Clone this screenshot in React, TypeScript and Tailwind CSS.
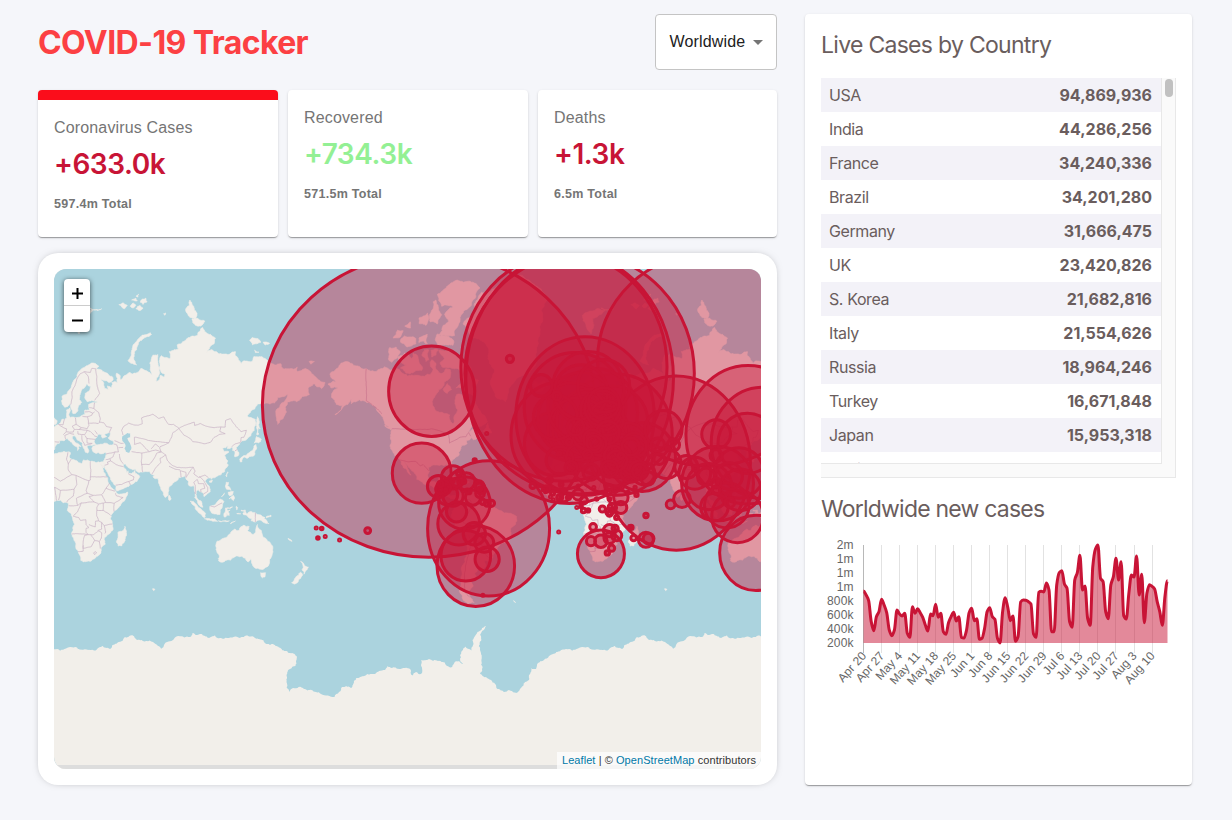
import React from "react";

/* ---------- geography (Web Mercator, zoom 1: one world is 512px wide) ---------- */

const WORLD = 512;
const MAP_W = 707;
const MAP_H = 500;
const EQUATOR_Y = 240;
const MAX_LAT = 85.0511;
const RAD = Math.PI / 180;
const SCALE = WORLD / (2 * Math.PI);

const lngToX = (lng: number) => (lng * WORLD) / 360;
const latToY = (lat: number) => {
  const l = Math.max(-MAX_LAT, Math.min(MAX_LAT, lat));
  return EQUATOR_Y - SCALE * Math.log(Math.tan(Math.PI / 4 + (l * RAD) / 2));
};
const yToLat = (y: number) => (2 * Math.atan(Math.exp((EQUATOR_Y - y) / SCALE)) - Math.PI / 2) / RAD;

type Pt = [number, number];

/* Repeatable noise in [-1, 1] that depends only on the position. */
const noise = (x: number, y: number) => {
  const s = Math.sin(x * 127.1 + y * 311.7) * 43758.5453;
  return (s - Math.floor(s)) * 2 - 1;
};

/* Breaks long coast segments into small uneven ones. */
const roughen = (a: Pt, b: Pt, amount: number): Pt[] => {
  const dx = b[0] - a[0];
  const dy = b[1] - a[1];
  const len = Math.hypot(dx, dy);
  if (len < 1.8) return [b];
  const k = noise(a[0] + b[0], a[1] + b[1]) * amount;
  const m: Pt = [(a[0] + b[0]) / 2 - dy * k, (a[1] + b[1]) / 2 + dx * k];
  return [...roughen(a, m, amount), ...roughen(m, b, amount)];
};

const toPath = (s: string, close: boolean, amount: number) => {
  const p: Pt[] = s
    .trim()
    .split(/\s+/)
    .map((pair) => {
      const [lng, lat] = pair.split(",").map(Number);
      return [lngToX(lng), latToY(lat)];
    });
  const out: Pt[] = [p[0]];
  for (let i = 1; i < p.length; i++) out.push(...roughen(p[i - 1], p[i], amount));
  if (close) out.push(...roughen(p[p.length - 1], p[0], amount));
  return out.map(([x, y], i) => `${i ? "L" : "M"}${x.toFixed(1)} ${y.toFixed(1)}`).join("") + (close ? "Z" : "");
};

const LAND: string[] = [
  // Eurasia
  "25.7,71.1 28,71 31,70.3 29,69.8 33,69.4 37,68.6 40,67.8 41,66.8 38,66.1 34,66.7 32.5,67.1 34.5,65.8 34.8,64.4 37.5,64 37,65.1 40,64.6 40.5,65.5 40,66.1 42,66.4 44,66.1 44,67.2 43.3,68.6 46,68 46.5,66.8 48,67.6 50,68.1 53,68.8 54.5,68.4 57,68.6 59,68.9 60.5,69.8 63,69.4 65,69.2 68.5,68.2 67,69.5 66.8,71 68,72 69,72.8 72.5,72.9 72.6,71 73.5,69.5 73.3,68.2 71.5,66.4 73.8,67 74,68 77,67.6 77.5,68.3 74.5,69 74,70.5 73.5,71.5 75,72.7 78,72.3 81,72 80.5,73.5 84,73.9 87,74 86,74.8 90,75.4 95,76.1 100,76.4 104,77.7 108,76.7 113,76 112,75 107,73.4 110,73.9 113.5,73.5 118,73 123,73 127,73.5 129,71.8 131,70.9 133,71.6 139,71.5 140,72.5 146,72.4 150,71.5 153,70.9 159,70.9 160.5,69.7 164,69.7 168,69.6 170.5,70.1 170.5,69 176,69.8 180,68.9 185,67 190,66.1 187.5,64.3 184,64.9 182,65.7 180,65 178,64.5 179,62.5 174,61.8 170,60 166,60.2 163.5,59.8 162,58 163,56.2 161.8,55 160,53.2 158.3,52.8 156.7,51 155.6,54.5 155.7,57 158,58 162,60.5 164,62.4 160,61.7 156.7,61.5 154.5,59.5 151,59.2 149,59.5 145,59.3 142.5,59.2 137.5,56 135.2,54.7 138,53.9 141,53.2 140.5,50 140.3,48.3 137,45.3 132,43.2 130,42 127.5,39.6 129.4,37 129.2,35.3 126.5,34.5 126.7,37.5 125,38 125,39.6 121.3,39 122,40.6 118,39.2 119,37.3 122.5,37.2 119.3,35 121.8,32 121,30.5 122,29.5 119.5,25.5 117,23.5 114,22.4 110.5,21.2 110,20.4 109.6,21.5 106.7,20.5 105.7,18.9 108.8,15.5 109.3,12 107,10.4 105,8.6 104.8,10.3 102.5,12 100.9,13.4 100,13 99.3,10 100.5,7.2 103,5.5 103.5,2.8 104.2,1.3 101.3,2.8 100.3,5.8 98.3,8 98.7,11.5 97.6,16.2 95.3,15.8 94.3,16.2 94,19 92,21.5 91.5,22.7 88.5,21.7 87,21.4 86.5,20 82.3,16.6 80.2,15.5 80.2,13 79.8,10.3 77.5,8.1 76.3,10 74.5,14 73,18 72.7,21 70.8,20.8 69,22.3 70.3,22.9 67.3,24.2 66.5,25.4 61.5,25.1 57.3,25.8 56.8,27 54.5,26.6 51.5,28 50,30.1 48,30 48.5,28.2 50.2,26.5 50.8,24.9 51.5,26 51.6,24.3 54,24.2 56.3,26.2 56.6,24.4 59.8,22.4 57.8,19 55.2,17.5 52,15.7 48,14 45,12.8 43.4,12.7 42.7,16.4 39.1,21.5 37,25 35,28 34.9,29.4 34.3,27.8 32.6,30 32.3,31.2 34.2,31.3 35,33 36,35.5 36,36.8 34,36.2 32.5,36.1 30.6,36.8 29,36.3 27.3,37 26.3,38.5 26.2,39.5 27,40.4 29,41.1 31.3,41.2 35,42 38.5,41 41.5,41.5 41,43 37.5,44.7 39,47.2 35,46.2 36.5,45.3 35,44.9 33.6,44.5 32.7,45.4 33,46.2 31,46.6 29.7,45.2 28,43.5 27.7,42.5 28.5,41.4 29,41.1 26.3,40.7 24,40.8 22.8,40.5 23.2,39.2 24,38 23,36.5 21.7,36.9 21,38.4 19.4,40.5 19.5,42 16,43.5 14.5,45.2 13.7,45.7 12.4,45.3 12.4,44.2 14,42.6 16.1,41.8 18.4,40 17,40.4 17,39 16,38 15.7,40 12.5,41.5 10.5,43 8.8,44.4 6.5,43.1 3.3,43.3 3.2,41.9 0,39.6 -.5,38.3 -2,36.8 -5.5,36.1 -6.5,37 -8.9,37 -9.4,38.8 -8.8,43.2 -1.6,43.4 -1.2,46 -4.6,48.2 -1.6,48.7 -1.7,49.7 1.5,50.8 4,51.7 5,53.2 8.5,53.7 8.2,57 10.6,57.7 10.5,56 9.8,55 11,54 14,54 18.6,54.7 21,55.2 21.2,57 23,57 24.3,57.2 23.7,59 28,59.6 30,59.9 26,60.4 22.8,60 21.3,61 21.3,62.8 25.4,65 22,65.7 21,64.6 17.5,62 17.2,60.7 19,59.8 16.5,58.5 16.3,56.8 14.3,55.5 12.8,55.5 11.2,59 10.5,59.2 7,58 5.2,59 5,61.8 10,63.8 12,65.5 14,67 16,68.5 19,69.8 22,70.4",
  // Africa
  "-6,35.8 -2,35.1 3,36.9 10,37.3 11,36.8 10.2,34.3 15.2,32.3 19,30.3 20,32.6 23,32.6 25,31.6 29,30.9 32.3,31.3 34.3,31.3 34.9,29.4 34.3,27.8 32.6,29.9 35.5,24 37.3,21 37.4,18.8 39.7,15 43.2,12 43.3,11.4 44.5,10.4 51.2,11.9 50,8 47,4 42,-1 39.5,-4.5 39,-7 40.7,-11 40.6,-15 36.8,-18 34.8,-20 35.5,-24 32.8,-26 32.5,-28.5 30,-31.5 26,-34 20,-34.8 18.3,-34 18.2,-32 15,-27 14.4,-22.5 11.8,-17.5 13.8,-11 12.3,-6 8.8,-1 9.8,3.5 8.5,4.6 6,4.3 4.3,6.3 1,5.9 -2,4.8 -7.5,4.4 -13,8.5 -16.8,12.5 -17.4,14.7 -16.2,19 -17,21 -14.5,26 -10,29.5 -9.5,32.5",
  "49.3,-12 50.4,-15.5 47.2,-25 44.5,-25.2 43.3,-22 44.5,-19.5 44.3,-16.3 47,-15.5",
  // Australia and New Zealand
  "142.5,-10.8 143.5,-14 145.3,-15 146.2,-18.8 149.5,-22 153.2,-25.5 153.4,-29 151,-33.5 150,-37.3 146.5,-39 143.5,-38.7 140,-37.8 138.3,-35.5 137.7,-33 136,-34.8 134,-32.7 131,-31.5 126,-32.3 123.5,-33.9 120,-34 118,-35 115.1,-34.2 115.7,-31.5 113.5,-26 114,-22.2 119,-20 122,-18 123.5,-17 126.5,-14 129.5,-15 130.8,-12.4 132.5,-11.4 136.7,-12.2 135.5,-15 139.5,-17.6 141,-16.5 141.6,-13",
  "144.7,-40.8 148.2,-40.9 147.8,-43 146,-43.5",
  "172.8,-34.5 175.5,-36.8 178.4,-37.7 177,-39.5 175.2,-41.6 175,-40 173.8,-39.3 174.7,-38 174.3,-36.3",
  "172.7,-40.6 174.2,-41.7 172.8,-43.8 170.7,-45.9 168.5,-46.6 166.5,-45.9 168.5,-44 171.2,-42.3",
  // South-east Asia
  "131,-.8 134,-.8 135,-3.3 138,-1.7 141,-2.6 145,-4.3 147.8,-6.2 147,-6.8 150.5,-10.3 147,-9.5 144,-7.8 141,-9.1 138,-8.3 138.5,-6.8 135,-4.4 132.8,-4 132.3,-2.8 134,-2.2 131.3,-1.5",
  "148.5,-5.7 152,-4.3 152,-5.4 149,-6.3",
  "109,1.8 111.3,2.5 113,3.3 116.7,7 119,5 117.7,1 116.2,-3.8 114.5,-4 110.2,-2.8 109,0",
  "95.3,5.6 97.5,5.2 100.5,2 103.5,-.8 106,-3 105.7,-5.8 104.3,-5.7 101,-2.5 98.7,1.6",
  "105.2,-6.8 108.5,-6.7 112.7,-6.9 114.5,-8.6 110,-8.1 106.5,-7.4",
  "115,-8.3 119,-8.4 122.8,-8.3 121,-8.9 117,-9",
  "123.5,-10.3 127,-8.4 125,-9.2",
  "119,-5.5 119,-3 120,.8 125,1.5 120.8,.4 121,-1 123.3,-.8 121.8,-1.9 122.8,-4.4 121.5,-4.5 121,-2.8 120.3,-5.5",
  "127.6,2 128.6,1 127.9,-.8 127.5,.8",
  "128,-3 130.8,-3.4 128.3,-3.5",
  "120.5,18.5 122.2,18.4 121.6,16 124,13 123,13.5 120.7,13.8 119.9,16",
  "122.5,7 124,8.5 125.6,9.6 126.4,7.5 125.5,5.8 123.5,7.7",
  "122,11.8 125.5,12.3 125,10.2 123,9.2 122,10.6",
  "117.3,8.5 119.4,11.2 119,10",
  "120.2,23 121.5,25.2 121.9,25 120.9,22",
  "108.7,19.3 110.8,20 110.4,18.5 109,18.3",
  "79.8,8.5 80.3,9.8 81.8,7.3 80.6,5.9 79.9,6.8",
  // Japan and Sakhalin
  "130,33 131,34 135,35.5 137,37 139,38 140,40.5 141.5,41.3 142,39.5 140.8,36 140,35 137,34.6 135.5,33.6 133,34.3 131.5,31.4 130.3,31.5",
  "140,42 141.8,45.4 145.3,43.8 143.3,42 141,42.3",
  "142.5,54.3 143.2,51 144.5,49 142.8,49.5 143.5,46.5 142,46.1 141.8,51.5",
  // Arctic Eurasia
  "51.5,71.6 53.5,71 57.5,70.6 55.5,72.3 56,73.4 58,74.5 61,75.6 68,76.6 67,76.9 60,76.2 56,75 54,73.6",
  "11,79.4 15,79.8 21,80.2 27,80 22,79.3 18,79 19,78 17,76.7 13.5,78",
  "24,80.3 33,80.2 30,80",
  "94,79.3 92,80 95,81.2 97,80.6 100,79.7 99,79",
  "96.5,78.9 100,79 105.5,78.6 102.5,77.9 99,78",
  "137,75.6 139,76.1 143,75.9 145,75.3 142,75 139,74.8",
  "146.5,75.3 151,75.1 148,74.8",
  "140.5,73.8 143.5,73.4 141,73.3",
  "178.8,71.4 182.5,71.4 180,70.8",
  "45,80.7 48,80.9 51,80.6 49,80.2 47,80.4",
  "53,80.5 55,80.9 57,80.6 55,80.3",
  "54,81.2 57,81.4 58,81.1",
  "57,80.2 60,80.6 62,80.3 59,80",
  "60,81 64,81.4 65,81 62,80.7",
  "57,81.6 59,81.8 58.5,81.5",
  "76.5,79.6 78,79.7 77.5,79.4",
  // Atlantic Europe
  "-5.5,50.2 -3,51.4 -5,52 -4.5,53.3 -3,54 -5,55 -6,57.5 -5,58.6 -3,58.5 -2,57.5 -3,56 0,53.5 1.7,52.6 1,51.2 -2,50.6",
  "-10,52 -9.8,54 -7.3,55.3 -5.7,54.5 -6.3,52.2",
  "-24,65.5 -22.5,66.4 -20,65.7 -16,66.5 -13.7,65 -18.5,63.4 -22.6,63.9 -22,64.6",
  // North America
  "-168,65.6 -164,66.5 -162,66.2 -166.5,68.3 -163,69.3 -160,70.5 -156.5,71.3 -150,70.5 -145,70 -141,69.7 -135,69 -128,70.2 -125,69.5 -121,69.8 -115,68.5 -112,67.8 -108,68 -104,68 -100,67.8 -98,68.4 -96,68.2 -94,69.5 -96,70.5 -95,71.8 -92,71 -92,69.5 -90,68.8 -88,68.5 -85,69.8 -82,69.5 -82,67.5 -86,66.3 -87,65 -90,64 -94,61 -94.5,58.8 -92.5,57 -86,55.6 -82.3,55 -82,52.8 -80,51.3 -79,52.5 -79,54.7 -76.6,57 -78.4,59 -77.5,62.4 -73.5,62.3 -70,61 -69.5,59 -66,58.8 -64.5,60.3 -61.5,57 -57.5,54.5 -55.8,52 -60,50.2 -66.5,50.2 -70,47.5 -65,49 -64.5,46.5 -61,45.5 -65.5,43.6 -67,44.8 -70.5,43.2 -70,41.7 -74,40.6 -76,37 -75.7,35.3 -78.5,33.8 -81.3,31.5 -80.2,26 -81.2,25.2 -82.7,28 -84.3,30 -89.5,29.3 -94,29.6 -97.3,27.7 -97.7,22.5 -95.8,18.8 -91,18.6 -90.3,21 -87,21.5 -88.2,17 -88,15.8 -83.3,15 -83.7,11 -81.5,9 -79.5,9.5 -77.3,8.6 -78.5,7.5 -80.3,7.4 -83,8.2 -85.7,10 -87.6,13 -92.3,14.5 -95,16 -101,17.5 -105.5,20.3 -105.5,22.5 -109,25.8 -112.5,29.8 -114.7,31.7 -112,27.5 -109.5,23.2 -110.3,23.5 -112.2,26 -115,28 -117.2,32.7 -120.6,34.6 -122.5,37.6 -124.3,40.4 -124,46 -123,48.8 -127.8,51 -130.5,54.8 -134,58 -139.5,59.7 -146,60.7 -151.5,59.3 -151,61.2 -154,59 -158,57.5 -163,55 -160,56.3 -157.5,58.7 -162,59 -165.5,61.5 -164.5,63.2 -161,64.5 -166,64.6",
  "-128,50.7 -125,49.8 -123.5,48.4 -126,49.3",
  "-59,47.7 -55.5,51.5 -53,47 -56,47",
  // Arctic Canada
  "-117,69.9 -113,68.6 -108,68.8 -102,69.3 -101.5,70.2 -105,72.7 -108,73.2 -109,72 -111,72.8 -114,73.2 -118.5,72.5 -117,71.3 -113,70.6",
  "-125.5,72 -123,71.2 -120,72 -117,73.4 -120,74.4 -124.5,74.3",
  "-90,73.8 -85,73.7 -81,73.7 -78,72.8 -74,71.8 -70,70.8 -67,69.5 -66.5,68 -62,66.7 -64,65.2 -67,66.2 -65,63.5 -66,62 -70,62.7 -74,64.5 -78,64.5 -73.5,66 -73,68.3 -77,69.8 -82,70 -88,70.3 -89,71.2 -86,72",
  "-87,64 -84,65.8 -81,64 -84,62.8",
  "-102,72.8 -100,73.9 -97,73.8 -97,71.8 -99,71.4",
  "-95.5,73.8 -90.5,73.9 -92,72.8 -95,72.4",
  "-91,76.7 -89,76.4 -80,75.7 -80,74.7 -90,74.6 -92.5,75.7",
  "-104,75.2 -104,76 -98,76.6 -98,75 -101,75.5",
  "-117,75.3 -114,76.4 -109,76.2 -106,75.9 -106,75 -113,74.5",
  "-122,76 -119,77.3 -115,77.2 -117,76.2",
  "-114,77.9 -110,78.5 -110,77.6",
  "-96,78.5 -94,81 -92,81.2 -88,79.5 -91,78.2",
  "-104,79 -104,78.3 -99,78 -98,79.7",
  "-90,76.5 -84,76.4 -79,76.4 -78,77.5 -75,78.7 -72,80 -65,81.3 -61,82.4 -68,83 -77,83.1 -85,82.4 -91,81.8 -88,80.5 -80,80.4 -86,79.5 -83,78.6 -87,78",
  // Greenland
  "-73,78.2 -66,79.3 -65,80.8 -60,82 -50,82.4 -40,83.2 -32,83.5 -22,82.6 -13,81.5 -18,80 -19,77 -20,75 -22,73 -22,70.5 -26,68.7 -33,67.7 -38,65.7 -41,63.5 -43,60 -48,61 -51.5,63.5 -53.5,66.7 -51,69.5 -54.5,71 -55,73 -58,75.3 -66,76",
  // Caribbean
  "-84.8,21.9 -82,23.1 -77,21.6 -74.3,20.2 -77.5,19.9 -79,21.5",
  "-74.3,18.5 -72,19.9 -68.5,18.7 -71.5,17.7",
  // South America
  "-77.3,8.6 -75,10.8 -71.7,12.3 -71.5,10.8 -68,10.9 -62,10.6 -57,6 -51.5,4.3 -50,.5 -48,-.8 -44,-2.8 -39.5,-3 -35.3,-5.3 -35,-8.5 -38.8,-13 -39.2,-17.8 -41,-22 -44.5,-23 -48.5,-26 -48.8,-28.5 -52.2,-32.3 -54.8,-34.8 -58.3,-34 -57,-36.5 -58.5,-38.6 -62.3,-39 -65,-41 -63.7,-42.6 -67.3,-45.7 -65.8,-47.5 -69,-50.5 -68.3,-52.5 -65.2,-54.8 -69.5,-55.4 -73.5,-53 -75.5,-50 -74,-45 -73.5,-41.5 -73.5,-37.2 -71.5,-32.5 -70.4,-24 -70.4,-18.4 -76,-14 -79,-8 -81.3,-5 -80,-2.8 -80.8,-1.8 -78.7,1.5 -77.5,4",
  "-61,-51.5 -58,-51.4 -59,-52.2",
  "-37.5,-54 -36,-54.8 -37,-54.5",
  "164,-20.2 166.8,-22.2 165.5,-21.7",
  "68.8,-48.8 70.4,-49 69.5,-49.7",
];

const INLAND_WATER: string[] = [
  "47.5,45.5 51,47 53,46.8 53,45 51,44.5 52.8,42 53.8,39 52.5,36.8 50,37.3 49,39 49.8,40.5 47.5,43",
];

const BORDERS: string[] = [
  // Scandinavia and eastern Europe
  "11.2,59 12.2,61.5 12,63.3 14,65 15.5,67 18,68.5 21,69 25,68.8 26,69.8 28.8,69.7",
  "20.6,69 23.5,67.8 24.1,65.8",
  "28.8,69.7 29.5,67.8 29.8,65 31.5,62.8 28,60.5",
  "28,59.6 27.5,57.5 30.8,56 32,53.3 31.5,52 34.5,51.7 36,50.2 40,49.6 38.3,47.2",
  "24.3,57.9 27.5,57.5",
  "21,56.2 24.5,56.3 26.6,55.7 28,56.2",
  "23,54.3 26,54.9 26.6,55.7",
  "19.5,54.4 23,54.3 23.7,52.5 23.6,51.5 24,50.5 22.7,49 18.8,49.5 15,51 14.5,53.9",
  "23.6,51.5 27,51.6 30.6,51.4 31.8,52.2",
  "15,51 12.3,50.2 13.8,48.7 17,48.7 18.8,49.5",
  "17,48.7 20.5,48.4 22.7,48.3 24.9,47.8 28.2,45.5 29.6,45.3",
  "22.7,48.3 21,46.2 16.3,46.5 16.2,47.9",
  "22.5,44.4 27,44 28.5,43.8",
  "22.5,44.4 21.3,45.8",
  "22.5,44.4 22.8,42 26.3,41.8",
  "19,46 19.2,43.5 20.5,42 21,40.8 26.3,41.8",
  "13.6,46.4 10.5,46.9 7,45.9 7.6,44",
  "6,46.2 8,47.6 13,47.5 13.5,48.6",
  "8,47.6 8.2,49 6,49.6 2.6,51 5.8,50.8 6.8,53.2",
  "0,42.7 3.1,42.5",
  "28.2,48.2 30,46.4",
  // Russia, Kazakhstan, Mongolia, China
  "48,46 47,48.3 48.7,50.3 52,51.6 55.5,50.8 59,50.7 61.5,51.3 61,53.8 65,54.6 69,55.3 73,53.6 76.7,54.2 80,51 83.5,51 87.3,49.2",
  "87.3,49.2 92,50.7 98,52 98.3,50.5 102.2,51.4 106,50.3 112,49.5 116.7,49.9 119.8,49.8",
  "119.8,49.8 120,52.7 123.5,53.5 127.5,50 131,47.7 134.7,48.3 133,45 131,44.8 130.7,42.5",
  "87.3,49.2 90.8,46 95.5,44.2 97,42.7 105,41.6 109.5,42.4 112,44.9 116,46.4 119.8,46.7 116,47.8 116.7,49.9",
  "87.3,49.2 83,47.2 82.3,45.3 80.2,42.2 74,40 73.7,39.4",
  "73.7,39.4 74.8,37.2 78,35.5 79,32.5 81.2,30.2 86,28 92,27.8 97.3,28.2 98.7,25.8 97.7,24 101.2,21.6 105.5,23.2 108,21.6",
  "80.2,42.2 71,42.8 66,43.3 61,44.3 56,45 56,41.3",
  "56,41.3 60,42.2 66.5,37.4 61.2,36.6 54,37.4",
  "66.5,37.4 71,38.3 74.8,37.2",
  "67.8,39 70.7,41.5 73.2,40",
  "61.2,36.6 60.8,31.5 61.7,25.2",
  "60.8,29.8 66.3,29.8 69.5,33 71.5,36.4 74.8,37.2",
  "68.2,23.7 71,27.8 74.5,31 74,33.5 78,35.5",
  "80.3,28.8 84.5,27 88.1,26.5",
  "88.8,21.8 88.2,26 92.2,25 92.3,21.5",
  "92.6,22 94.5,25 97.3,28.2",
  "97.7,18.5 98.8,16.2 98.8,10.5",
  "97.7,18.5 100.2,20.3 101,17.6 104.7,17.5 105.5,14.4 102.5,13.6 102.8,11.8",
  "101.7,22.3 104.8,19.5 107.5,15 107.5,12.3 104.5,10.5",
  "124.3,40 127,41.6 130.5,42.3",
  "126.7,37.8 128.4,38.6",
  "141,-2.6 141,-9.1",
  "109.6,2 112.5,1.5 115,3 117.6,4.2",
  // Middle East
  "36,36 42.3,37.2 44.8,37.2 44.2,39.4 43.5,41.1 41.5,41.5",
  "44.8,39.6 48,39.7",
  "42,43.2 46.5,41.8 48.4,41.9",
  "45.4,36 46,33 48,30.3",
  "42.3,37.2 41,34.4 38.8,33.3 35.8,32.7",
  "38.8,33.3 39.2,32 44.7,29.2 48.4,28.5",
  "39.2,32 37,31.3 37.5,30 35,29.4",
  "42.8,16.5 47,17 52,19 55.2,20 55.7,22 51.7,24",
  "52,19 53.1,16.7",
  // Africa
  "25,31.6 25,22 37,22",
  "9.5,30.2 9.5,26.5 12,23.5 15,23 24,19.5 25,20 25,22",
  "9.2,37 8.2,33 9.5,30.2 11.5,33.1",
  "-1.2,35 -1.8,32 -8.7,28.7 -8.7,27.3 4,19.2 12,23.5",
  "15,23 15.5,17 13.5,13.7 4,13 0,15 -5,11 -8,12",
  "24,19.5 22,13 22.8,11 27,9.5 33,10 36,14.5 38.5,17.8",
  "22.8,11 15.2,7.5 16,2.5 13,2.2 9.8,2.3",
  "27,9.5 24,8.7 27.5,5 30.8,3.5 35.8,4.6 34,8 33,10",
  "35.8,4.6 41.8,4 48,8 43,9.5 42.7,11",
  "41.8,4 41.5,-1.6",
  "36,14.5 42.4,12.5",
  "13.5,13.7 13,9 9,6 8.5,4.7",
  "4,13 2.7,6.3",
  "0,15 1.2,6",
  "-2.8,11 -3,5.1",
  "16,2.5 18.6,4.3 23,4.7 27.5,5",
  "18.6,4.3 16,-2 13,-5 16.8,-6 18,-8 21.8,-7.5 22,-11 24,-13 22,-13.5 22,-16.2 23.4,-17.6 11.8,-17.3",
  "24,-10.8 28.5,-12.5 28.7,-8.5 30.8,-8.3 29.4,-4.4 29.6,1.2 30.8,3.5",
  "29.6,-1 34,-1 37.5,-3 39.3,-4.6",
  "34,-1 34,4.2",
  "30.8,-8.3 33,-9.4 34.7,-11.6 40.4,-10.5",
  "33,-9.4 33,-14 30.2,-15 33,-16.5 32.8,-20 31.3,-22.3 32,-26.8",
  "34.7,-11.6 35.8,-16 35.2,-17",
  "30.2,-15.6 27,-18 25.2,-17.7 28,-21.5 31.3,-22.3",
  "28,-21.5 25.7,-25.5 20,-26.7 20,-22 21,-18.2 25.2,-17.7",
  "20,-24.8 20,-28.4 16.5,-28.6",
  "27.2,-29.5 28.6,-28.7 29.3,-29.5 28,-30.5 27.2,-29.5",
  // Americas
  "-141,69.7 -141,60.3 -137,59 -130,55.5",
  "-123,49 -95,49 -89,48 -83,46 -82.5,42 -79,43.3 -75,45 -71,45.2 -69,47.3 -67.5,45.5",
  "-117.1,32.5 -111,31.4 -106.5,31.8 -103,29 -101,29.7 -97.2,26",
  "-92,15 -90.5,17.8 -89,17.8",
  "-71.5,12 -73,7 -67.5,6 -67,1.2 -70,-4 -73,-9.5 -69.5,-11 -65.5,-10 -60,-14 -58,-20 -54.5,-24 -57.8,-30 -53.4,-33.7",
  "-60,5 -64,2 -67,1.2",
  "-69.5,-17.5 -67,-23 -70,-33 -72,-42 -72,-50 -68.5,-52.5",
  "-67,-22.8 -62.5,-22 -58,-27 -54.6,-25.6",
];

const landPath = LAND.map((s) => toPath(s, true, 0.16)).join("");
const waterPath = INLAND_WATER.map((s) => toPath(s, true, 0.12)).join("");
const borderPath = BORDERS.map((s) => toPath(s, false, 0.04)).join("");

/* Antarctic coast in map pixels, one world long. */
const ICE: Pt[] = [
  [0, 380], [12, 379.5], [24, 380], [32, 380.5], [40, 381.5], [45, 378.5], [49, 377], [52, 379], [56, 380], [58, 377], [65, 373],
  [71, 368], [78, 366], [83, 371], [92, 372], [99, 373], [104, 377], [107, 380], [110, 376], [114.5, 372.5], [124.5, 367],
  [136, 368], [138.5, 364], [143, 366], [147.5, 365], [154, 369], [161, 366.5], [168, 369.5], [175, 369], [179.5, 368],
  [186, 369], [193.5, 366.5], [200, 368], [207, 370.5], [211, 374], [218.5, 375], [225, 378.5], [232.5, 382], [236, 384],
  [243, 388], [241.5, 397], [236, 400], [233, 408], [232.5, 413], [235, 423], [239, 419], [250, 420], [257.5, 421],
  [262, 423], [267, 425], [280.5, 428], [285, 423], [288, 418], [292, 417], [297, 419], [300, 412], [302.5, 409],
  [310, 407], [317.5, 405], [325, 402], [331, 401], [333.5, 397], [338, 399], [345, 400], [356.5, 400.5], [358.5, 406.5],
  [362, 403], [367, 405], [368, 399], [367, 391], [375, 390], [384, 392], [391, 394], [396.5, 398.5], [402, 392],
  [409, 395], [406, 386], [409, 381], [411.5, 377.5], [415, 380], [417.5, 381.5], [418.5, 371], [421, 367], [425, 362.5],
  [428, 359], [432, 357], [428, 362], [426, 366], [426, 381], [427.5, 392.5], [426, 404], [432, 408], [437, 411],
  [443.5, 420], [450, 423], [455, 421], [462, 424], [466, 420], [469, 417], [475, 411], [475, 406], [477, 399], [482, 400],
  [484, 394], [490, 391], [495, 387], [499, 385], [506, 382], [512, 380],
];
const roughIce: Pt[] = ICE.slice(1).flatMap((p, i) => roughen(ICE[i], p, 0.18));
const icePath =
  "M-2 520L-2 380" +
  [0, WORLD].map((dx) => roughIce.map(([x, y]) => `L${(x + dx).toFixed(1)} ${y.toFixed(1)}`).join("")).join("") +
  "L1040 520Z";

/* ---------- confirmed cases: latitude, longitude, total (thousands) ---------- */

const COUNTRIES: [number, number, number][] = [
  [38, -97, 94870], [20, 77, 44286], [46, 2, 34240], [-10, -55, 34201], [51, 9, 31666], [54, -2, 23421], [37, 127.5, 21683],
  [42.83, 12.83, 21555], [60, 100, 18964], [39, 35, 16672], [36, 138, 15953], [40, -4, 13290], [16, 106, 11365],
  [-27, 133, 9860], [-34, -64, 9633], [52.5, 5.75, 8370], [32, 53, 7500], [23, -102, 6970], [4, -72, 6295], [-5, 120, 6300],
  [52, 20, 6120], [39.5, -8, 5380], [49, 32, 5030], [23.5, 121, 4950], [40, 127, 4772], [2.5, 112.5, 4740], [47.33, 13.33, 4770],
  [39, 22, 4650], [31.5, 34.75, 4620], [15, 100, 4620], [50.83, 4, 4440], [-30, -71, 4400], [-10, -76, 4050], [60, -95, 4120],
  [49.75, 15.5, 4020], [47, 8, 4000], [-29, 24, 4010], [13, 122, 3840], [46, 25, 3180], [56, 10, 3150], [62, 15, 2560],
  [33, 44, 2450], [44, 21, 2200], [47, 20, 2000], [24, 90, 2008], [1.37, 103.8, 1810], [48.67, 19.5, 1830], [22.27, 114.19, 1440],
  [31, 36, 1720], [42, 43.5, 1730], [53, -8, 1650], [30, 70, 1565], [48, 68, 1470], [62, 10, 1460], [64, 26, 1200],
  [32, -5, 1263], [43, 25, 1220], [45.17, 15.5, 1190], [33.83, 35.83, 1190], [56, 24, 1200], [34, 9, 1143], [46.12, 14.82, 1100],
  [21.5, -80, 1109], [15.5, -90.25, 1080], [-17, -65, 1090], [10, -84, 1000], [28, 84, 990], [24, 54, 1008], [-2, -77.5, 980],
  [53, 28, 994], [9, -80, 970], [-33, -56, 980], [46, 105, 950], [57, 25, 870], [40.5, 47.5, 812], [25, 45, 812], [-23, -58, 714],
  [26, 50.55, 670], [7, 81, 669], [29.5, 45.75, 657], [19, -70.67, 637], [22, 98, 614], [32, 35.25, 676], [35, 33, 574],
  [59, 26, 593], [47, 29, 565], [8, -66, 540], [27, 30, 515], [25, 17, 506], [8, 38, 493], [40, 45, 432], [25.5, 51.25, 420],
  [-21.1, 55.6, 465], [15, -86.5, 451], [21, 57, 397], [44, 18, 395], [41.83, 22, 336], [1, 38, 338], [-15, 30, 332], [41, 20, 326],
  [-22, 24, 325], [49.75, 6.17, 283], [42, 19, 274], [28, 3, 270], [10, 8, 263], [-20, 30, 256], [41, 64, 243], [4.5, 114.67, 220],
  [-20.3, 57.5, 245], [-18.25, 35, 230], [14.67, -61, 219], [18, 105, 212], [41, 75, 204], [65, -18, 203], [33, 65, 190],
  [3.25, 73, 184], [13.8, -88.9, 201], [11, -61, 176], [16.25, -61.58, 192], [8, -2, 168], [-22, 17, 169], [1, 32, 169],
  [18.25, -77.5, 149], [13, 105, 137], [-2, 30, 132], [6, 12, 121], [35.8, 14.6, 114], [-12.5, 18.5, 103], [13.17, -59.5, 101],
  [4, -53, 94], [0, 25, 92], [14, -14, 88], [-13.5, 34, 88], [8, -5, 87], [4, -56, 81], [-15, -140, 76], [-26.5, 31.5, 73],
  [5, -59, 71], [17.25, -88.75, 68], [-20, 47, 66.6], [15, 30, 63], [20, -12, 63], [16, -24, 62], [27.5, 90.5, 60], [35, 38, 57],
  [-3.5, 30, 47], [-1, 11.75, 48], [-4.58, 55.67, 46], [42.5, 1.6, 46], [12.12, -68.93, 45], [12.5, -69.97, 42], [-12.83, 45.17, 40],
  [8, 1.17, 38], [-6, 35, 38], [11, -10, 37], [24.25, -76, 37], [-29.5, 28.5, 34], [62, -7, 34.6], [19, -72.42, 33], [17, -4, 31],
  [19.5, -80.5, 30], [13.88, -61.13, 28], [9.5, 2.25, 27], [10, 49, 27], [-1, 15, 25], [13, -2, 21], [13, -85, 15], [7, 30, 18],
  [39, 71, 18], [2, 10, 17], [7, 21, 15], [11.5, 43, 15.7], [36.18, -5.37, 20], [72, -40, 12], [13.47, -16.57, 12], [15, 48, 12],
  [16, 8, 9], [-12.17, 44.25, 8.5], [12, -15, 8.6], [8.5, -11.5, 7.7], [6.5, -9.5, 7.8], [15, 19, 7.5], [15, 39, 10], [1, 7, 6],
  [46.83, -56.33, 3], [32.33, -64.75, 17], [-51.75, -59, 1.8], [-15.95, -5.7, 2], [-21.23, -159.77, 6], [-13.58, -172.33, 15],
  [-20, -175, 14], [-19.03, -169.87, 0.1], [-13.3, -176.2, 0.8], [35, 105, 236], [22.17, 113.55, 0.8],
];

const EARTH = 6371000;
const OFFSET_X = 0.8;
const GREENWICH_X = WORLD + OFFSET_X;

const circles = COUNTRIES.map(([lat, lng, thousands]) => {
  const latR = (Math.sqrt(thousands * 1000) * 800) / EARTH / RAD;
  const top = latToY(lat + latR);
  const bottom = latToY(lat - latR);
  const cy = (top + bottom) / 2;
  const lat2 = yToLat(cy);
  let lngR =
    Math.acos(
      (Math.cos(latR * RAD) - Math.sin(lat * RAD) * Math.sin(lat2 * RAD)) / (Math.cos(lat * RAD) * Math.cos(lat2 * RAD)),
    ) / RAD;
  if (Number.isNaN(lngR) || lngR === 0) lngR = latR / Math.cos(lat * RAD);
  return { cx: GREENWICH_X + lngToX(lng), cy, rx: Math.max(1, lngToX(lngR)), ry: Math.max(1, cy - top) };
}).filter((c) => c.cx - c.rx < MAP_W + 4);

function WorldMap() {
  return (
    <div className="relative h-[500px] w-full overflow-hidden rounded-[12px] bg-[#ddd]">
      <svg className="block" width={MAP_W} height={MAP_H} viewBox={`0 0 ${MAP_W} ${MAP_H}`}>
        <rect width={MAP_W} height={496} fill="#abd3de" />
        {[0, WORLD].map((dx) => (
          <g key={dx} transform={`translate(${dx + OFFSET_X} 0)`}>
            <path d={landPath} fill="#f2efea" stroke="#f2efea" strokeWidth={0.6} strokeLinejoin="round" />
            <path d={waterPath} fill="#abd3de" />
            <path d={borderPath} fill="none" stroke="#cdb9c9" strokeWidth={0.8} strokeLinejoin="round" />
          </g>
        ))}
        <path d={icePath} fill="#f2efea" />
        <rect y={496} width={MAP_W} height={4} fill="#ddd" />
        <g fill="#c81436" fillOpacity={0.4} stroke="#c81436" strokeWidth={3}>
          {circles.map((c, i) => (
            <ellipse key={i} {...c} />
          ))}
        </g>
      </svg>

      <div className="absolute left-[10px] top-[10px] flex w-[26px] flex-col overflow-hidden rounded-[4px] bg-white shadow-[0_1px_5px_rgba(0,0,0,0.65)]">
        <button aria-label="Zoom in" className="flex h-[27px] items-center justify-center border-b border-[#ccc] pl-px pt-[3px]">
          <svg width="11" height="11" viewBox="0 0 11 11">
            <path d="M0 5.5h11M5.5 0v11" stroke="#000" strokeWidth="2" fill="none" />
          </svg>
        </button>
        <button aria-label="Zoom out" className="flex h-[26px] items-center justify-center pl-px pt-[2px]">
          <svg width="11" height="11" viewBox="0 0 11 11">
            <path d="M0 5.5h11" stroke="#000" strokeWidth="2.2" fill="none" />
          </svg>
        </button>
      </div>

      <div className="absolute bottom-0 right-0 h-[17px] whitespace-nowrap bg-white/70 px-[5px] font-['Liberation_Sans',sans-serif] text-[11px] leading-[17px] tracking-[0.07px] text-[#333]">
        <span className="text-[#0078a8]">Leaflet</span> | © <span className="text-[#0078a8]">OpenStreetMap</span> contributors
      </div>
    </div>
  );
}

/* ---------- chart ---------- */

const DAILY = [
  183, 195, 212, 275, 302, 260, 245, 208, 225, 248, 300, 317, 300, 240, 252, 258, 250, 310, 322, 230, 250, 236, 248, 262, 285, 303,
  252, 257, 223, 262, 250, 305, 313, 278, 260, 247, 273, 260, 322, 324, 300, 248, 235, 272, 266, 328, 325, 295, 245, 233, 260, 268,
  325, 339, 245, 203, 232, 272, 258, 334, 320, 216, 210, 211, 215, 222, 312, 322, 187, 184, 186, 159, 180, 305, 305, 165, 128, 122,
  162, 175, 275, 292, 150, 128, 76, 180, 168, 265, 286, 110, 58, 45, 145, 155, 245, 266, 165, 140, 85, 150, 95, 257, 267, 190, 135,
  141, 78, 195, 133, 278, 190, 164, 169, 177, 215, 245, 286, 200, 152,
];
const LEFT = 42.5;
const STEP = 304 / (DAILY.length - 1);
const pts = DAILY.map((v, i) => [LEFT + STEP * i, v / 3] as const);
const slope = pts.map((p, i) => {
  if (i === 0 || i === pts.length - 1) return 0;
  const a = p[1] - pts[i - 1][1];
  const b = pts[i + 1][1] - p[1];
  return a * b <= 0 ? 0 : (2 * a * b) / (a + b);
});
const line = pts
  .map((p, i) => {
    if (!i) return `M${p[0]} ${p[1]}`;
    const q = pts[i - 1];
    return `C${q[0] + STEP / 3} ${q[1] + slope[i - 1] / 3} ${p[0] - STEP / 3} ${p[1] - slope[i] / 3} ${p[0]} ${p[1]}`;
  })
  .join("");

const WEEKS = ["Apr 20", "Apr 27", "May 4", "May 11", "May 18", "May 25", "Jun 1", "Jun 8", "Jun 15", "Jun 22", "Jun 29", "Jul 6", "Jul 13", "Jul 20", "Jul 27", "Aug 3", "Aug 10"];
const TICKS = ["2m", "1m", "1m", "1m", "800k", "600k", "400k", "200k"];

function CasesChart() {
  return (
    <svg className="block font-['Liberation_Sans',sans-serif]" width="355" height="170" viewBox="0 0 355 170">
      {WEEKS.map((w, i) => {
        const x = LEFT + STEP * 7 * i;
        return (
          <g key={w}>
            <path d={`M${Math.floor(x) + 0.5} 15V123`} stroke={i ? "#e2e2e2" : "#b8b8b8"} />
            <text transform={`translate(${x + 0.5} 123.5) rotate(-48)`} y="4" textAnchor="end" fontSize="12" letterSpacing="0.1" fill="#666">
              {w}
            </text>
          </g>
        );
      })}
      {TICKS.map((t, i) => (
        <text key={i} x="32.5" y={19 + i * 14} textAnchor="end" fontSize="12" letterSpacing="0.1" fill="#666">
          {t}
        </text>
      ))}
      <path d={`${line}V113H${LEFT}Z`} fill="#c81436" fillOpacity="0.5" />
      <path d={line} fill="none" stroke="#c81436" strokeWidth="3" strokeLinejoin="round" />
    </svg>
  );
}

/* ---------- panels ---------- */

const STATS = [
  { title: "Coronavirus Cases", delta: "+633.0k", total: "597.4m", active: true, tone: "text-[#c81436]", box: "w-[240px]" },
  { title: "Recovered", delta: "+734.3k", total: "571.5m", active: false, tone: "text-[#93f094]", box: "w-[240px]" },
  { title: "Deaths", delta: "+1.3k", total: "6.5m", active: false, tone: "text-[#c81436]", box: "w-[239px]" },
];

const ROWS = [
  ["USA", "94,869,936"],
  ["India", "44,286,256"],
  ["France", "34,240,336"],
  ["Brazil", "34,201,280"],
  ["Germany", "31,666,475"],
  ["UK", "23,420,826"],
  ["S. Korea", "21,682,816"],
  ["Italy", "21,554,626"],
  ["Russia", "18,964,246"],
  ["Turkey", "16,671,848"],
  ["Japan", "15,953,318"],
  ["Spain", "13,294,139"],
];

export default function App() {
  return (
    <div className="flex h-[820px] w-[1232px] gap-[28px] overflow-hidden bg-[#f5f6fa] pl-[38px] pt-[14px] font-['Inter',sans-serif]">
      <main className="flex w-[739px] flex-col">
        <header className="flex h-[56px] items-center justify-between">
          <h1 className="whitespace-nowrap pt-[2px] text-[32px] font-bold leading-none tracking-[-0.6px] text-[#fc4043]">COVID-19 Tracker</h1>
          <button className="flex h-[56px] w-[122px] items-center justify-between rounded-[4px] border border-[#c4c4c4] bg-white pl-[13.5px] pr-[13px] font-['Liberation_Sans',sans-serif] text-[16px] tracking-[0.15px] text-[#212121]">
            <span>Worldwide</span>
            <svg width="10" height="5" viewBox="0 0 10 5">
              <path d="M0 0l5 5 5-5z" fill="#757575" />
            </svg>
          </button>
        </header>

        <section className="mt-[20px] flex gap-[10px]">
          {STATS.map((s) => (
            <article
              key={s.title}
              className={`${s.box} ${s.active ? "border-t-[10px] border-[#fb0d1b]" : ""} h-[147px] rounded-[4px] bg-white px-[16px] pt-[16px] font-['Liberation_Sans',sans-serif] shadow-[0_2px_1px_-1px_rgba(0,0,0,0.2),0_1px_1px_rgba(0,0,0,0.14),0_1px_3px_rgba(0,0,0,0.12)]`}
            >
              <p className="text-[16px] leading-[24px] tracking-[0.15px] text-[#757575]">{s.title}</p>
              <h2 className={`${s.tone} mt-[7px] font-['Inter',sans-serif] text-[28px] font-semibold leading-[35px] tracking-[-0.45px]`}>{s.delta}</h2>
              <p className="mt-[13px] text-[12.5px] font-bold leading-[18px] tracking-[0.27px] text-[#757575]">{s.total} Total</p>
            </article>
          ))}
        </section>

        <section className="mt-[16px] h-[532px] rounded-[20px] bg-white p-[16px] shadow-[0_0_8px_-4px_rgba(0,0,0,0.5)]">
          <WorldMap />
        </section>
      </main>

      <aside className="flex h-[771px] w-[387px] flex-col rounded-[4px] bg-white px-[16px] pt-[16px] text-[#6a5d5d] shadow-[0_2px_1px_-1px_rgba(0,0,0,0.2),0_1px_1px_rgba(0,0,0,0.14),0_1px_3px_rgba(0,0,0,0.12)]">
        <h3 className="whitespace-nowrap text-[23px] leading-[30px] tracking-[-0.71px]">Live Cases by Country</h3>
        <div className="mt-[18px] flex h-[400px] w-[355px] flex-col border-b border-r border-[#e8e8e8] bg-[#fafafa]">
          <div className="flex h-[386px]">
            <div className="h-[386px] w-[341px] overflow-hidden border-b border-r border-[#e8e8e8] bg-white">
              {ROWS.map(([name, n], i) => (
                <div
                  key={name}
                  className={`${i % 2 ? "bg-white" : "bg-[#f3f2f8]"} flex h-[34px] items-center justify-between pl-[8px] pr-[9px] text-[16px]`}
                >
                  <span className="tracking-[-0.4px]">{name}</span>
                  <span className="font-bold">{n}</span>
                </div>
              ))}
            </div>
            <div className="ml-[3px] mt-px h-[18px] w-[8px] rounded-full bg-[#c1c1c1]" />
          </div>
        </div>
        <h3 className="mt-[16px] whitespace-nowrap text-[23px] leading-[30px] tracking-[-0.78px]">Worldwide new cases</h3>
        <div className="mt-[6px]">
          <CasesChart />
        </div>
      </aside>
    </div>
  );
}
